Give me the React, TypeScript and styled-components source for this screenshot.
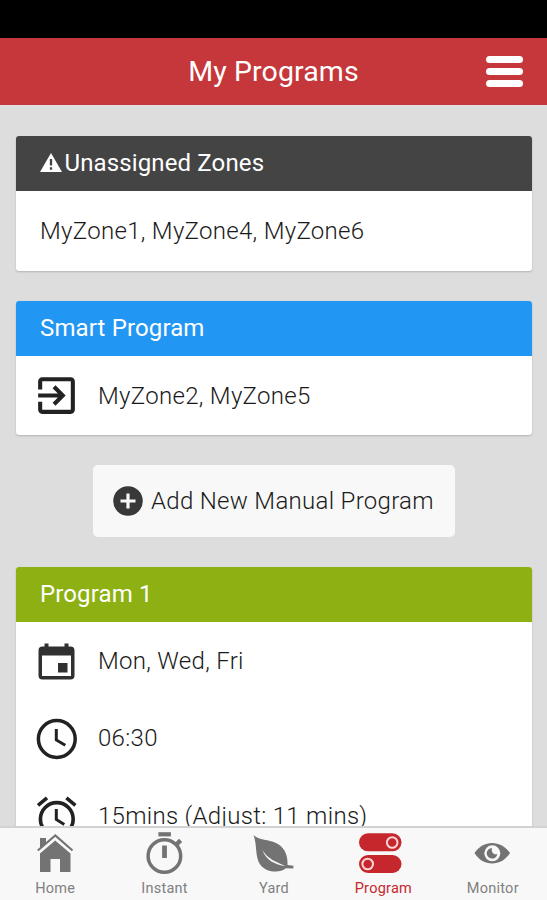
import React from "react";
import styled, { createGlobalStyle } from "styled-components";

const GlobalStyle = createGlobalStyle`
  * { box-sizing: border-box; }
  body { margin: 0; background: #dcdddc; }
`;

const Screen = styled.div`
  display: flex;
  flex-direction: column;
  width: 547px;
  height: 900px;
  overflow: hidden;
  background: #dcdddc;
  font-family: Roboto, "Liberation Sans", sans-serif;
  color: #1a1a1a;
`;

const StatusBar = styled.div`
  flex: none;
  height: 38px;
  background: #000;
`;

const Toolbar = styled.header`
  flex: none;
  display: grid;
  grid-template-columns: 61px 1fr 61px;
  align-items: center;
  height: 67px;
  background: #c5373a;
`;

const Title = styled.h1`
  grid-column: 2;
  margin: 0;
  text-align: center;
  font-size: 28.5px;
  line-height: 34px;
  font-weight: 400;
  letter-spacing: 0.1px;
  color: #fff;
`;

const MenuButton = styled.button`
  display: flex;
  flex-direction: column;
  gap: 4.5px;
  width: 37px;
  padding: 0;
  border: 0;
  background: none;
`;

const MenuBar = styled.span`
  height: 7.6px;
  border-radius: 3.8px;
  background: #fff;
`;

const Content = styled.main`
  flex: 1;
  min-height: 0;
  overflow: hidden;
  display: flex;
  flex-direction: column;
  gap: 30px;
  padding: 31px 15px 0 16px;
`;

const Card = styled.section`
  flex: none;
  border-radius: 3px;
  overflow: hidden;
  background: #fff;
  box-shadow: 0 1px 2px rgba(0, 0, 0, 0.2);
`;

const CardHeader = styled.h2<{ $color: string }>`
  display: flex;
  align-items: center;
  height: 55px;
  margin: 0;
  padding: 0 24px 1px;
  background: ${(p) => p.$color};
  color: #fff;
  font-size: 24px;
  font-weight: 400;
  letter-spacing: 0.13px;
  white-space: pre;
`;

const Row = styled.div<{ $height: number }>`
  display: flex;
  align-items: center;
  height: ${(p) => p.$height}px;
  padding-left: 16px;
`;

const RowText = styled.span<{ $inset: number }>`
  margin-left: ${(p) => p.$inset}px;
  font-size: 24px;
  font-weight: 300;
  line-height: 32px;
  letter-spacing: 0.3px;
  white-space: pre;
`;

const AddButton = styled.button`
  flex: none;
  align-self: center;
  display: flex;
  align-items: center;
  gap: 8px;
  width: 362px;
  height: 72px;
  padding: 0 0 0 20px;
  border: 0;
  border-radius: 5px;
  background: #f8f8f8;
  color: #1a1a1a;
  font: 300 24px Roboto, "Liberation Sans", sans-serif;
  letter-spacing: 0.3px;
  white-space: pre;
`;

const TabBar = styled.nav`
  flex: none;
  display: grid;
  grid-template-columns: repeat(5, 1fr);
  height: 74px;
  border-top: 2px solid #d2d2d2;
  background: #f8f8f8;
`;

const Tab = styled.a<{ $active?: boolean }>`
  display: flex;
  flex-direction: column;
  align-items: center;
  padding-top: 3px;
  color: ${(p) => (p.$active ? "#c5272d" : "#808080")};
  font-size: 14.5px;
  line-height: 18px;
  letter-spacing: 0.25px;
`;

const TabLabel = styled.span`
  margin: 5px 0 0 1px;
`;

const Icon = styled.svg`
  flex: none;
  display: block;
`;

const WarningIcon = () => (
  <Icon width="24.5" height="22" viewBox="0 0 24.5 22">
    <path d="M11 1 22 20H0z" fill="#fff" />
    <path d="M11 7v6.5M11 15.3v2.5" stroke="#444" strokeWidth="2.3" />
  </Icon>
);

const EnterIcon = () => (
  <Icon width="49" height="49" viewBox="0 0 24 24" fill="#222">
    <path d="M10.09 15.59 11.5 17l5-5-5-5-1.41 1.41L12.67 11H3v2h9.67zM19 3H5c-1.11 0-2 .9-2 2v4h2V5h14v14H5v-4H3v4c0 1.1.89 2 2 2h14c1.1 0 2-.9 2-2V5c0-1.1-.9-2-2-2z" />
  </Icon>
);

const CalendarIcon = () => (
  <Icon width="49" height="48" viewBox="0 0 49 48">
    <path d="M10.5 9.500h28a4 4 0 0 1 4 4v25a4 4 0 0 1-4 4h-28a4 4 0 0 1-4-4V13.500a4 4 0 0 1 4-4zM10 18.500v20.500h29V18.500z" fillRule="evenodd" fill="#303030" />
    <path d="M14.5 6.500v5M34.5 6.500v5" stroke="#303030" strokeWidth="4" />
    <path d="M26 26h9.5V35.500H26z" fill="#303030" />
  </Icon>
);

const ClockIcon = () => (
  <Icon width="49" height="48" viewBox="0 0 49 48" fill="none" stroke="#222">
    <circle cx="24.8" cy="25" r="18.4" strokeWidth="3.5" />
    <path d="M24.3 15v11l9 5.3" strokeWidth="3" />
  </Icon>
);

const AlarmIcon = () => (
  <Icon width="49" height="48" viewBox="0 0 49 48" fill="none" stroke="#222">
    <circle cx="24.8" cy="27" r="16.4" strokeWidth="3.6" />
    <path d="M24.3 17v10.5l8 5" strokeWidth="3" />
    <path d="m6 13.3 9-7.4M43.4 13.3l-9-7.4" strokeWidth="3.6" />
  </Icon>
);

const PlusIcon = () => (
  <Icon width="30" height="30" viewBox="0 0 30 30">
    <circle cx="15" cy="15" r="14.8" fill="#383838" />
    <path d="M15 7.5v15M7.5 15h15" stroke="#f8f8f8" strokeWidth="3.2" />
  </Icon>
);

const HomeIcon = () => (
  <Icon width="44" height="44" viewBox="0 0 44 44" fill="#737373">
    <path d="M7 7h6v5L7 17.5zM7 41V22.5L22.2 9.5 37.5 22.5V41H27V28H17.5v13z" />
    <path d="m4.8 19.5 17.5-15 17.2 15" fill="none" stroke="#737373" strokeWidth="2.2" />
    <path d="M6 21.2 22.2 7.4 38.3 21.2" fill="none" stroke="#f8f8f8" strokeWidth="1.4" />
  </Icon>
);

const StopwatchIcon = () => (
  <Icon width="44" height="44" viewBox="0 0 44 44" fill="none" stroke="#737373">
    <circle cx="22.4" cy="25" r="16.3" strokeWidth="3.5" />
    <path d="M16.4 3.3h12.5" strokeWidth="4.2" />
    <path d="M22.5 14.5V27" strokeWidth="4.8" />
    <path d="m34.9 13 3.7-3.7" strokeWidth="4.5" />
  </Icon>
);

const LeafIcon = () => (
  <Icon width="44" height="44" viewBox="0 0 44 44">
    <path d="M2.5 4C8 9.5 17 8 25 12 33 16 37 23 36.5 34L42.5 34.7 42.3 37.5 34.8 37.3C29 42.500 15 41.500 9.500 34 3.500 25.500 6.500 14.500 2.500 4z" fill="#737373" />
    <path d="M11.5 19C17 28.500 25 30.500 34.5 35.300 24 33.500 15 29.500 11.5 19z" fill="#f8f8f8" />
  </Icon>
);

const TogglesIcon = () => (
  <Icon width="48" height="44" viewBox="0 0 48 44">
    <rect x="0" y="2.3" width="42.5" height="18" rx="9" fill="#c5272d" />
    <rect x="0" y="24" width="42.5" height="18" rx="9" fill="#c5272d" />
    <circle cx="33.2" cy="11.5" r="5.3" fill="none" stroke="#fbd5d5" strokeWidth="2" />
    <circle cx="8.7" cy="33" r="5.3" fill="none" stroke="#fbd5d5" strokeWidth="2" />
  </Icon>
);

const EyeIcon = () => (
  <Icon width="44" height="44" viewBox="0 0 44 44">
    <path d="M4.5 22C13 8.5 31 8.5 40 22 31 36 13 36 4.5 22z" fill="#737373" />
    <circle cx="22.3" cy="22.3" r="8" fill="#f8f8f8" />
    <path d="M22 17a5.3 5.3 0 1 0 5.3 5.9c-3.4 1.5-6.3-1.7-5.3-5.9z" fill="#737373" />
  </Icon>
);

const tabs = [
  { label: "Home", icon: <HomeIcon /> },
  { label: "Instant", icon: <StopwatchIcon /> },
  { label: "Yard", icon: <LeafIcon /> },
  { label: "Program", icon: <TogglesIcon />, active: true },
  { label: "Monitor", icon: <EyeIcon /> },
];

const programRows = [
  { icon: <CalendarIcon />, text: "Mon, Wed, Fri" },
  { icon: <ClockIcon />, text: "06:30" },
  { icon: <AlarmIcon />, text: "15mins (Adjust: 11 mins)" },
];

export default function App() {
  return (
    <>
      <GlobalStyle />
      <Screen>
        <StatusBar />
        <Toolbar>
          <Title>My Programs</Title>
          <MenuButton aria-label="Menu">
            <MenuBar />
            <MenuBar />
            <MenuBar />
          </MenuButton>
        </Toolbar>
        <Content>
          <Card>
            <CardHeader $color="#444444">
              <WarningIcon />
              Unassigned Zones
            </CardHeader>
            <Row $height={80}>
              <RowText $inset={8}>MyZone1, MyZone4, MyZone6</RowText>
            </Row>
          </Card>
          <Card>
            <CardHeader $color="#2196f3">Smart Program</CardHeader>
            <Row $height={79}>
              <EnterIcon />
              <RowText $inset={17}>MyZone2, MyZone5</RowText>
            </Row>
          </Card>
          <AddButton>
            <PlusIcon />
            Add New Manual Program
          </AddButton>
          <Card>
            <CardHeader $color="#8db013">Program 1</CardHeader>
            {programRows.map((row) => (
              <Row key={row.text} $height={77.5}>
                {row.icon}
                <RowText $inset={17}>{row.text}</RowText>
              </Row>
            ))}
          </Card>
        </Content>
        <TabBar>
          {tabs.map((tab) => (
            <Tab key={tab.label} $active={tab.active}>
              {tab.icon}
              <TabLabel>{tab.label}</TabLabel>
            </Tab>
          ))}
        </TabBar>
      </Screen>
    </>
  );
}
